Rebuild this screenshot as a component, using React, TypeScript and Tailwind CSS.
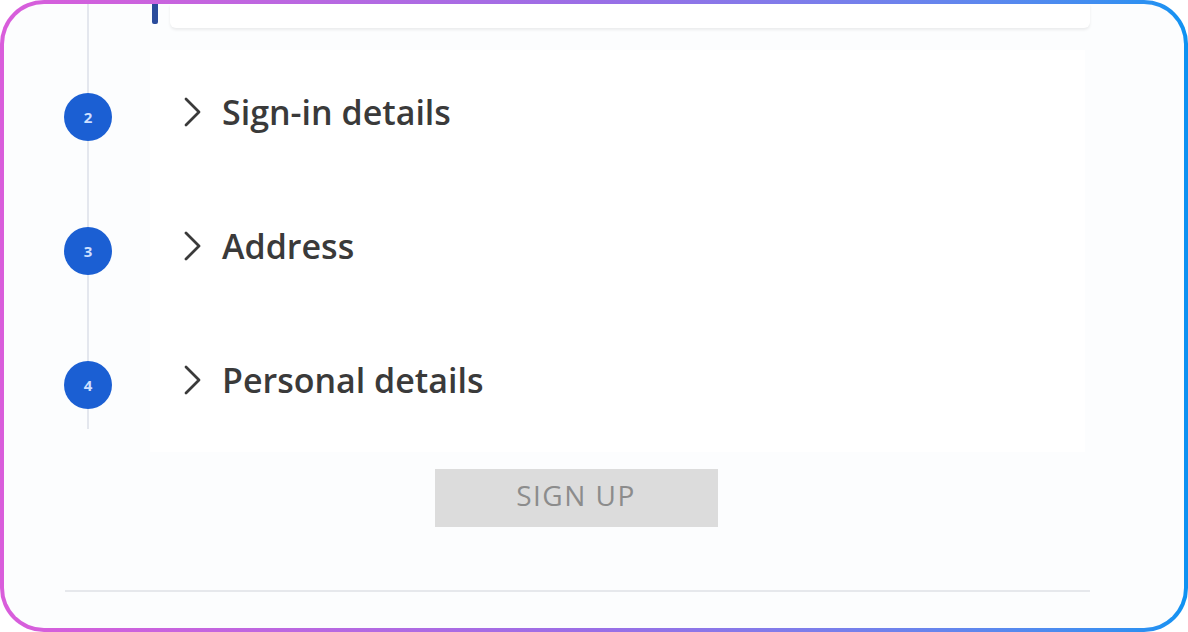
import React from "react";

function Chevron() {
  return (
    <svg width="20" height="32" viewBox="0 0 20 32" fill="none" className="shrink-0">
      <path d="M3 3 L16 16 L3 29" stroke="#3a3a3a" strokeWidth="2.8" strokeLinecap="round" strokeLinejoin="round" />
    </svg>
  );
}

const steps = [
  { n: 2, label: "Sign-in details" },
  { n: 3, label: "Address" },
  { n: 4, label: "Personal details" },
];

export default function App() {
  return (
    <div className="w-[1188px] h-[632px] rounded-[44px] p-[4px] bg-gradient-to-r from-[#d95ddb] via-[#9a6ee6] to-[#0a92f2]" style={{ fontFamily: "'Open Sans', Lato, sans-serif" }}>
      <div className="h-full w-full rounded-[40px] bg-[#fcfdfe] overflow-hidden flex flex-col">
        <div className="relative flex">
          {/* stepper line */}
          <div className="absolute left-[83px] top-0 h-[425px] w-[2px] bg-[#e4e7ee]" />
          <div className="w-[60px] shrink-0" />
          <div className="flex flex-col">
            {/* top card remnant */}
            <div className="flex h-[26px] pl-[88px]">
              <div className="w-[6px] h-[20px] bg-[#2b4c9c] rounded-b-[2px]" />
              <div className="ml-[12px] w-[920px] h-[24px] bg-white rounded-b-[6px] shadow-[0_2px_3px_rgba(0,0,0,0.07)]" />
            </div>
            <div className="h-[20px]" />
            {steps.map((s) => (
              <div key={s.n} className="flex h-[134px] items-center">
                <div className="relative z-10 w-[48px] h-[48px] rounded-full bg-[#1b5fd3] flex items-center justify-center text-[#cfe0ff] text-[15px] font-bold">
                  {s.n}
                </div>
                <div className="ml-[38px] w-[935px] h-full bg-white flex items-center pl-[33px] pb-[10px]">
                  <Chevron />
                  <span className="ml-[19px] text-[34px] font-semibold text-[#3a3a3a] leading-none tracking-[0px]">{s.label}</span>
                </div>
              </div>
            ))}
          </div>
        </div>
        <div className="flex justify-center mt-[17px] pr-[36px]">
          <div className="w-[283px] h-[58px] bg-[#dcdcdc] flex items-center justify-center pb-[6px] text-[28px] text-[#8c8c8c] tracking-[1.5px]">
            SIGN UP
          </div>
        </div>
        <div className="mt-[63px] ml-[61px] w-[1025px] h-[2px] bg-[#e6e8ec]" />
      </div>
    </div>
  );
}
